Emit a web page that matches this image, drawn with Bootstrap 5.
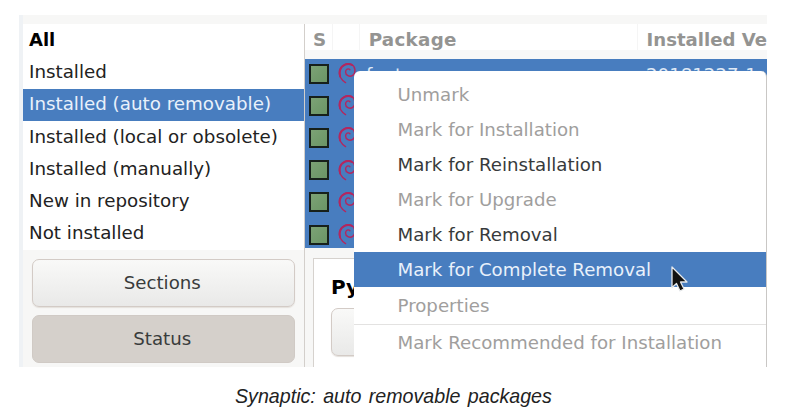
<!DOCTYPE html>
<html lang="en">
<head>
<meta charset="utf-8">
<title>Synaptic</title>
<link rel="stylesheet" href="https://cdn.jsdelivr.net/npm/bootstrap@5.3.0/dist/css/bootstrap.min.css">
<style>
body{font-family:"DejaVu Sans",sans-serif;font-size:18.2px;line-height:1;color:#222;background:#fff;overflow:hidden}
.page{width:798px;height:411px;padding:15px 0 0 19px}
.shot{width:748px;height:352px;background:#f7f7f6;padding-top:9px;border-left:4px solid #eff2f5}
.side{width:281px}
.filters{height:226px;background:#fff}
.filters .f-item{height:32.25px;padding:0 0 0 6px;color:#222;font-size:18.28px}
.filters .f-item.fw-bold{color:#000;font-size:18px}
.filters .f-item.active{background:#487dbf;color:#e9f1fb;padding-bottom:1px}
.side-btns{padding:9px 9.5px 0 9px}
.gbtn{height:48px;border:1.5px solid #d3cbc6;border-radius:7px;background:linear-gradient(#f9f9f8,#e9e9e8);color:#393c3c;font-size:18.2px;line-height:1;padding:0 2px 0 0;box-shadow:0 1px 1px #e4e0dc}
.gbtn.pressed{background:#d5d0cb;border-color:#d0cac5;box-shadow:none}
.main{border-left:1.5px solid #d3cfcb}
.thead-row{height:34.5px;background:linear-gradient(#fff 26px,#f8f8f8 26px);color:#949492;font-size:18.3px}
.thead-row>div{height:26px;border-right:1px solid #f5f5f5;white-space:nowrap;padding-top:7px}
.thead-row .h-pkg{letter-spacing:.3px}
.thead-row .h-ver{border-right:0;font-size:18.1px}
.rows{height:189.5px;background:#487dbf;overflow:hidden;color:#dfe9f6}
.pk{height:32.2px;padding:0 0 2px 4px}
.pk-text{padding-top:3px}
.sq{width:20px;height:20px;border:2px solid #17201b;background:linear-gradient(135deg,#7ca275,#6b9566)}
.details{margin:10px 0 0 8px;height:109px;background:#fff;border:1px solid #d6d2ce;border-right:0;border-bottom:0;padding:18px 0 0 17px}
.details .gbtn{margin-top:11px}
.ctx{left:354px;top:71px;width:412.5px;height:296px;background:#fff;border-radius:6px 6px 0 0;border-right:1px solid #c9c7c5;padding-top:6px}
.ctx-item{height:35px;padding:1px 0 0 43.5px;color:#373a3b;white-space:nowrap}
.ctx-item.off{color:#a09e9d}
.ctx-item.hot{background:#487dbf;color:#e9f1fb}
.ctx-item.props{height:37px}
.ctx-sep{height:1px;background:#e3e2e1}
.pointer{left:670px;top:265px}
.cap{width:317px;margin:19px 0 0 216px;font:italic 19.65px/20px "Liberation Sans",Arial,sans-serif;color:#222;white-space:nowrap;word-spacing:1.9px}
</style>
<script src="https://cdn.jsdelivr.net/npm/bootstrap@5.3.0/dist/js/bootstrap.bundle.min.js"></script>
</head>
<body>
<svg class="d-none"><symbol id="swirl" viewBox="0 0 20 24"><path d="M16 14C12.5 16 8.5 14 8.5 10.5C8.5 7.5 11.5 6.3 13 8M16 14C19.5 11 19 4.5 14.5 2.5C9.5 .5 3.5 3.5 2.2 9C1.2 14 4 19 8.5 21.5" fill="none" stroke="#b3275f" stroke-width="1.5" stroke-linecap="round"/><path d="M15 3C10 .8 4.5 3.5 2.7 8.5C2 11 2.2 13 2.8 15" fill="none" stroke="#b3275f" stroke-width="2.1" stroke-linecap="round"/></symbol></svg>
<main class="page">
  <div class="shot d-flex">
    <aside class="side flex-shrink-0">
      <div class="filters d-flex flex-column">
        <div class="f-item d-flex align-items-center fw-bold">All</div>
        <div class="f-item d-flex align-items-center">Installed</div>
        <div class="f-item d-flex align-items-center active">Installed (auto removable)</div>
        <div class="f-item d-flex align-items-center">Installed (local or obsolete)</div>
        <div class="f-item d-flex align-items-center">Installed (manually)</div>
        <div class="f-item d-flex align-items-center">New in repository</div>
        <div class="f-item d-flex align-items-center">Not installed</div>
      </div>
      <div class="side-btns d-grid gap-2">
        <button class="btn gbtn" type="button">Sections</button>
        <button class="btn gbtn pressed" type="button">Status</button>
      </div>
    </aside>
    <section class="main flex-grow-1 overflow-hidden">
      <div class="thead-row d-flex fw-bold">
        <div style="width:28px;padding-left:8px">S</div>
        <div style="width:27px"></div>
        <div class="h-pkg" style="width:280px;padding-left:9px">Package</div>
        <div class="h-ver" style="padding-left:9px">Installed Ve</div>
      </div>
      <div class="rows">
        <div class="pk d-flex align-items-center"><span class="sq"></span><svg class="ms-2 me-2" width="20" height="23"><use href="#swirl"/></svg><span class="pk-text" style="width:281px;padding-left:1px">fonts</span><span class="pk-text">20181227-1</span></div>
        <div class="pk d-flex align-items-center"><span class="sq"></span><svg class="ms-2" width="20" height="23"><use href="#swirl"/></svg></div>
        <div class="pk d-flex align-items-center"><span class="sq"></span><svg class="ms-2" width="20" height="23"><use href="#swirl"/></svg></div>
        <div class="pk d-flex align-items-center"><span class="sq"></span><svg class="ms-2" width="20" height="23"><use href="#swirl"/></svg></div>
        <div class="pk d-flex align-items-center"><span class="sq"></span><svg class="ms-2" width="20" height="23"><use href="#swirl"/></svg></div>
        <div class="pk d-flex align-items-center"><span class="sq"></span><svg class="ms-2" width="20" height="23"><use href="#swirl"/></svg></div>
      </div>
      <div class="details">
        <div class="fw-bold text-black fs-5 lh-1">Py</div>
        <button class="btn gbtn w-50 d-block" type="button" aria-label="Details"></button>
      </div>
    </section>
  </div>
  <div class="cap">Synaptic: auto removable packages</div>
</main>
<div class="ctx position-absolute" role="menu">
  <div class="ctx-item d-flex align-items-center off">Unmark</div>
  <div class="ctx-item d-flex align-items-center off">Mark for Installation</div>
  <div class="ctx-item d-flex align-items-center">Mark for Reinstallation</div>
  <div class="ctx-item d-flex align-items-center off">Mark for Upgrade</div>
  <div class="ctx-item d-flex align-items-center">Mark for Removal</div>
  <div class="ctx-item d-flex align-items-center hot">Mark for Complete Removal</div>
  <div class="ctx-item d-flex align-items-center off props">Properties</div>
  <div class="ctx-sep"></div>
  <div class="ctx-item d-flex align-items-center off">Mark Recommended for Installation</div>
</div>
<svg class="pointer position-absolute" width="20" height="30" viewBox="0 0 20 30"><path d="M2 2V22.5L6.5 18.5L10 26L14 24L10.5 17H17Z" fill="#111" stroke="#e8eaec" stroke-width="1.3" stroke-linejoin="round"/></svg>
</body>
</html>
